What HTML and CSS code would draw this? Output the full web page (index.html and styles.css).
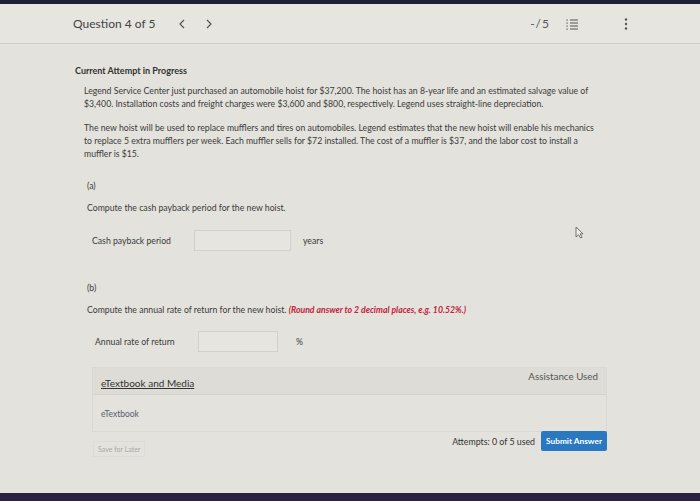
FILE: index.html
```html
<!DOCTYPE html>
<html lang="en">
<head>
    <meta charset="UTF-8">
    <title>Question 4 of 5</title>
    <link rel="stylesheet" href="styles.css">
</head>
<body>
<div class="screen-top"></div>
<header class="q-header">
    <div class="q-nav">
        <span class="q-title">Question 4 of 5</span>
        <svg class="q-arrow prev" width="6" height="10" viewBox="0 0 6 10">
            <path d="M5 1L1 5l4 4" fill="none" stroke="#555" stroke-width="1.2"/>
        </svg>
        <svg class="q-arrow next" width="6" height="10" viewBox="0 0 6 10">
            <path d="M1 1l4 4-4 4" fill="none" stroke="#555" stroke-width="1.2"/>
        </svg>
    </div>
    <div class="q-tools">
        <span class="q-score">-/5</span>
        <svg class="q-list" width="12" height="12" viewBox="0 0 12 12">
            <g fill="none" stroke="#555" stroke-width="1">
                <path d="M4 2h8M4 5h8M4 8h8M4 11h8"/>
            </g>
            <g fill="#555">
                <rect x="0.5" y="1.5" width="1.2" height="1.2"/>
                <rect x="0.5" y="4.5" width="1.2" height="1.2"/>
                <rect x="0.5" y="7.5" width="1.2" height="1.2"/>
                <rect x="0.5" y="10.5" width="1.2" height="1.2"/>
            </g>
        </svg>
        <svg class="q-more" width="4" height="12" viewBox="0 0 4 12">
            <circle cx="2" cy="1.5" r="1.2" fill="#555"/>
            <circle cx="2" cy="6" r="1.2" fill="#555"/>
            <circle cx="2" cy="10.5" r="1.2" fill="#555"/>
        </svg>
    </div>
</header>

<main class="q-body">
    <h2 class="attempt">Current Attempt in Progress</h2>

    <div class="problem">
        <p>Legend Service Center just purchased an automobile hoist for $37,200. The hoist has an 8-year life and an estimated salvage value of<br>
        $3,400. Installation costs and freight charges were $3,600 and $800, respectively. Legend uses straight-line depreciation.</p>
        <p>The new hoist will be used to replace mufflers and tires on automobiles. Legend estimates that the new hoist will enable his mechanics<br>
        to replace 5 extra mufflers per week. Each muffler sells for $72 installed. The cost of a muffler is $37, and the labor cost to install a<br>
        muffler is $15.</p>
    </div>

    <section class="part part-a">
        <div class="part-label">(a)</div>
        <p class="part-q">Compute the cash payback period for the new hoist.</p>
        <div class="answer-row">
            <span class="answer-label">Cash payback period</span>
            <span class="answer-box"></span>
            <span class="answer-unit">years</span>
        </div>
    </section>

    <section class="part part-b">
        <div class="part-label">(b)</div>
        <p class="part-q">Compute the annual rate of return for the new hoist. <em class="hint">(Round answer to 2 decimal places, e.g. 10.52%.)</em></p>
        <div class="answer-row">
            <span class="answer-label">Annual rate of return</span>
            <span class="answer-box short"></span>
            <span class="answer-unit">%</span>
        </div>
    </section>

    <div class="assist">
        <div class="assist-head">
            <a class="assist-link" href="#">eTextbook and Media</a>
            <span class="assist-used">Assistance Used</span>
        </div>
        <div class="assist-item">eTextbook</div>
    </div>

    <div class="footer-row">
        <button class="btn-save">Save for Later</button>
        <div class="submit-wrap">
            <span class="attempts">Attempts: 0 of 5 used</span>
            <button class="btn-submit">Submit Answer</button>
        </div>
    </div>
</main>

<!-- mouse pointer left on the screen -->
<svg class="pointer" width="9" height="13" viewBox="0 0 9 13">
    <path d="M1 1v10l2.5-2.3L5.5 12l1.6-.8-2-3.3H8z" fill="#eee" stroke="#555" stroke-width="0.8" stroke-linejoin="round"/>
</svg>
<div class="screen-bottom"></div>
</body>
</html>
```

FILE: styles.css
```css
:root {
    --bg: #e3e2dc;
    --text: #3b3b3b;
    --line: #cfcec8;
    --blue: #2a78c0;
}
html, body {
    height: 100%;
}
body {
    margin: 0;
    background: var(--bg);
    font-family: Lato, 'Open Sans', Arial, sans-serif;
    color: var(--text);
    display: flex;
    flex-direction: column;
    overflow: hidden;
    position: relative;
}
.screen-top {
    height: 4px;
    background: #1e2038;
    flex: none;
}
.screen-bottom {
    height: 8px;
    background: #2c2140;
    flex: none;
    margin-top: auto;
}
.q-header {
    height: 39px;
    border-bottom: 1px solid var(--line);
    display: flex;
    align-items: center;
    justify-content: space-between;
    padding: 0 72px 0 73px;
    flex: none;
    background: #e6e5e0;
}
.q-nav {
    display: flex;
    align-items: center;
}
.q-title {
    font-size: 12px;
    color: #444;
}
.q-arrow.prev {
    margin-left: 24px;
}
.q-arrow.next {
    margin-left: 21px;
}
.q-tools {
    display: flex;
    align-items: center;
}
.q-score {
    font-size: 12px;
    color: #555;
    letter-spacing: 1px;
}
.q-list {
    margin-left: 16px;
}
.q-more {
    margin-left: 46px;
}
.q-body {
    padding: 21px 0 0 75px;
    width: 540px;
}
.attempt {
    font-size: 9px;
    font-weight: 700;
    margin: 0 0 8px 0;
    color: #333;
}
.problem {
    padding-left: 9px;
}
.problem p {
    font-size: 8.7px;
    line-height: 13px;
    margin: 0 0 11px 0;
}
.part {
    padding-left: 12px;
}
.part-label {
    font-size: 8.7px;
}
.part-a {
    margin-top: 20px;
}
.part-b {
    margin-top: 31px;
}
.part-q {
    font-size: 8.7px;
    margin: 11px 0 0 0;
}
.hint {
    color: #c4233a;
    font-weight: 700;
}
.answer-row {
    display: flex;
    align-items: center;
    margin-top: 17px;
    padding-left: 5px;
}
.part-b .answer-row {
    padding-left: 8px;
    margin-top: 16px;
}
.answer-label {
    font-size: 8.7px;
    width: 102px;
}
.answer-box {
    width: 95px;
    height: 19px;
    border: 1px solid #d2d1cb;
    background: #e6e5e0;
}
.answer-box.short {
    width: 78px;
}
.answer-unit {
    font-size: 8.7px;
    margin-left: 12px;
}
.part-b .answer-label {
    width: 103px;
}
.part-b .answer-unit {
    margin-left: 18px;
}
.assist {
    margin: 15px 0 0 17px;
    width: 513px;
    border: 1px solid #d9d8d2;
}
.assist-head {
    display: flex;
    justify-content: space-between;
    align-items: flex-start;
    height: 26px;
    background: #dddcd6;
    border-bottom: 1px solid #d3d2cc;
    padding: 0 8px;
}
.assist-link {
    font-size: 10px;
    color: #333;
    margin-top: 9px;
    text-decoration: underline;
}
.assist-used {
    font-size: 9.8px;
    color: #555;
    margin-top: 2px;
}
.assist-item {
    font-size: 8.5px;
    color: #5a6170;
    padding: 14px 8px 12px 8px;
}
.footer-row {
    display: flex;
    justify-content: space-between;
    margin-left: 18px;
    width: 514px;
}
.btn-save {
    font-family: inherit;
    font-size: 7px;
    color: #aaa;
    background: none;
    border: 1px solid #dcdbd5;
    padding: 3px 4px;
    margin-top: 9px;
    align-self: flex-start;
}
.submit-wrap {
    display: flex;
    align-items: center;
    margin-top: -7px;
}
.attempts {
    font-size: 8.8px;
    color: #333;
    margin-right: 6px;
}
.btn-submit {
    font-family: inherit;
    font-size: 8.3px;
    font-weight: 700;
    color: #fff;
    background: var(--blue);
    border: none;
    border-radius: 2px;
    height: 20px;
    padding: 0 5px;
}
.pointer {
    position: absolute;
    left: 575px;
    top: 226px;
}
```
